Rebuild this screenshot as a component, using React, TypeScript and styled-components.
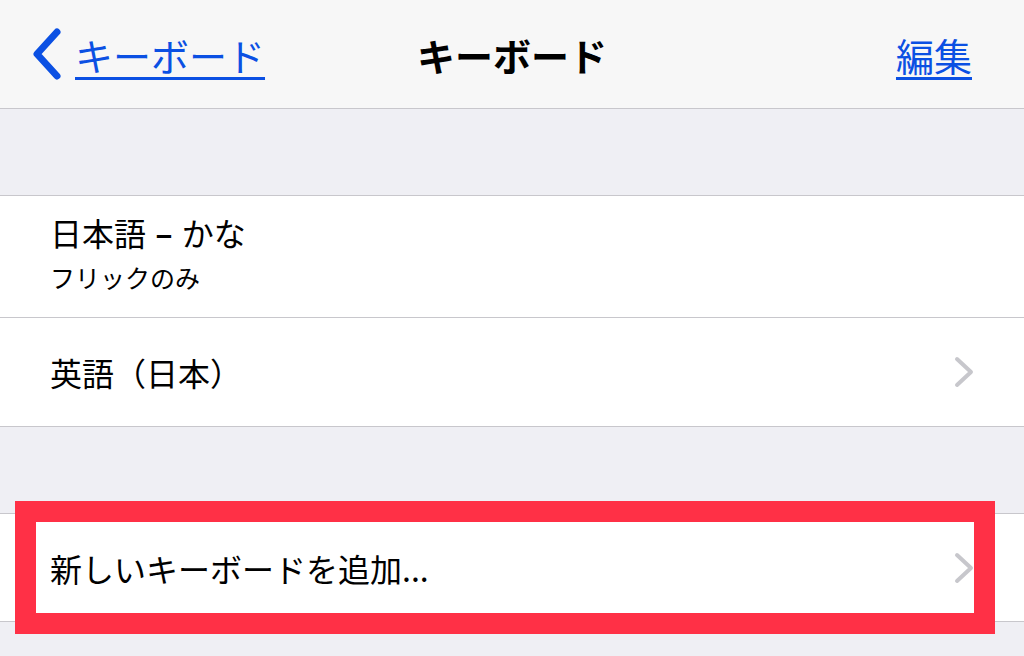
import React from 'react';
import styled, { createGlobalStyle } from 'styled-components';

const GlobalStyle = createGlobalStyle`
  html, body {
    margin: 0;
    padding: 0;
    background: #efeff4;
    font-family: "Noto Sans CJK JP", "Noto Sans", sans-serif;
    color: #000;
  }
`;

const Screen = styled.div`
  width: 1024px;
  height: 656px;
  overflow: hidden;
  background: #efeff4;
`;

const NavBar = styled.header`
  height: 108px;
  display: grid;
  grid-template-columns: 1fr auto 1fr;
  align-items: center;
  background: #f7f7f7;
  border-bottom: 1px solid #c8c7cc;
`;

const BackLink = styled.a`
  display: flex;
  align-items: center;
  gap: 12px;
  padding-left: 31px;
  color: #0b50e3;
  font-size: 38px;
  text-decoration: underline;
  text-decoration-thickness: 3px;
  text-underline-offset: 6px;
  cursor: pointer;
`;

const Title = styled.h1`
  margin: 0;
  font-size: 38px;
  font-weight: 700;
`;

const EditLink = styled.a`
  justify-self: end;
  padding-right: 52px;
  color: #0b50e3;
  font-size: 38px;
  text-decoration: underline;
  text-decoration-thickness: 3px;
  text-underline-offset: 6px;
  cursor: pointer;
`;

const Group = styled.section<{ $gap: number }>`
  position: relative;
  margin-top: ${p => p.$gap}px;
  background: #fff;
  border-top: 1px solid #c8c7cc;
  border-bottom: 1px solid #c8c7cc;
`;

const Row = styled.div<{ $height: number; $divider?: boolean }>`
  height: ${p => p.$height}px;
  display: flex;
  align-items: center;
  justify-content: space-between;
  padding: 0 49px 0 50px;
  box-sizing: border-box;
  border-bottom: ${p => (p.$divider ? '1px solid #c8c7cc' : 'none')};
`;

const StackedRow = styled(Row)`
  align-items: flex-start;
  padding-top: 16px;
`;

const Label = styled.div`
  display: flex;
  flex-direction: column;
`;

const MainText = styled.span`
  font-size: 32px;
  line-height: 40px;
`;

const Dash = styled.span`
  font-weight: 700;
  margin: 0 2px;
`;

const SubText = styled.span`
  margin-top: 10px;
  font-size: 25px;
  line-height: 30px;
`;

const Highlight = styled.div`
  position: absolute;
  top: -13px;
  left: 15px;
  width: 980px;
  height: 133px;
  box-sizing: border-box;
  border: 21px solid #ff3046;
  pointer-events: none;
`;

const BackChevron = () => (
  <svg width="32" height="54" viewBox="0 0 32 54">
    <path d="M26 5 L6 27 L26 49" fill="none" stroke="#0b50e3" strokeWidth="7" strokeLinecap="round" strokeLinejoin="round" />
  </svg>
);

const Chevron = () => (
  <svg width="22" height="32" viewBox="0 0 22 32">
    <path d="M4 3 L18 16 L4 29" fill="none" stroke="#c7c7cc" strokeWidth="4" strokeLinecap="round" strokeLinejoin="round" />
  </svg>
);

const App: React.FC = () => {
  return (
    <Screen>
      <GlobalStyle />
      <NavBar>
        <BackLink>
          <BackChevron />
          キーボード
        </BackLink>
        <Title>キーボード</Title>
        <EditLink>編集</EditLink>
      </NavBar>

      <Group $gap={86}>
        <StackedRow $height={122} $divider>
          <Label>
            <MainText>
              日本語 <Dash>–</Dash> かな
            </MainText>
            <SubText>フリックのみ</SubText>
          </Label>
        </StackedRow>
        <Row $height={108}>
          <MainText>英語（日本）</MainText>
          <Chevron />
        </Row>
      </Group>

      <Group $gap={86}>
        <Row $height={107}>
          <MainText>新しいキーボードを追加...</MainText>
          <Chevron />
        </Row>
        <Highlight />
      </Group>
    </Screen>
  );
};

export default App;
